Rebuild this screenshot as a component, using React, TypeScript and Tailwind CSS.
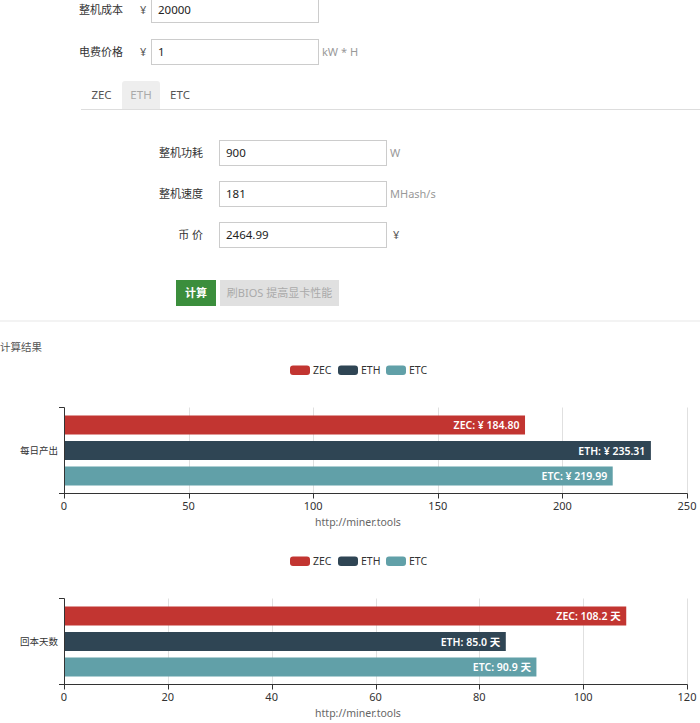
import React from "react";

const FONT = '"Noto Sans", "Noto Sans CJK SC", sans-serif';
const COLORS = { ZEC: "#c23531", ETH: "#2f4554", ETC: "#61a0a8" };

type Bar = { name: "ZEC" | "ETH" | "ETC"; value: number; label: string };

function Chart({ max, step, bars, category, height }: { max: number; step: number; bars: Bar[]; category: string; height: number }) {
  const x0 = 64;
  const x1 = 687;
  const top = 52.5;
  const bottom = 138.5;
  const sx = (v: number) => x0 + (v / max) * (x1 - x0);
  const ticks: number[] = [];
  for (let v = 0; v <= max; v += step) ticks.push(v);
  const barTops = [60.5, 86, 111.5];
  const legend: { name: "ZEC" | "ETH" | "ETC"; x: number }[] = [
    { name: "ZEC", x: 290 },
    { name: "ETH", x: 338 },
    { name: "ETC", x: 386 },
  ];
  return (
    <svg width={700} height={height} className="block" style={{ fontFamily: FONT }}>
      {legend.map((l) => (
        <g key={l.name}>
          <rect x={l.x} y={10.5} width={20} height={9.5} rx={3} fill={COLORS[l.name]} />
          <text x={l.x + 23} y={19} fontSize={10.5} fill="#333">{l.name}</text>
        </g>
      ))}
      {ticks.slice(1).map((v) => (
        <line key={v} x1={Math.round(sx(v)) + 0.5} x2={Math.round(sx(v)) + 0.5} y1={top} y2={bottom} stroke="#e0e0e0" strokeWidth={1} />
      ))}
      {bars.map((b, i) => (
        <g key={b.name}>
          <rect x={x0 + 0.5} y={barTops[i]} width={sx(b.value) - x0} height={19} fill={COLORS[b.name]} />
          <text x={sx(b.value) - 5} y={barTops[i] + 13.5} fontSize={10.5} fontWeight={600} fill="#fff" textAnchor="end">{b.label}</text>
        </g>
      ))}
      <line x1={x0 + 0.5} x2={x0 + 0.5} y1={top} y2={bottom} stroke="#333" />
      <line x1={x0 - 5} x2={x0 + 0.5} y1={top} y2={top} stroke="#333" />
      <line x1={x0 - 5} x2={x0 + 0.5} y1={bottom} y2={bottom} stroke="#333" />
      <line x1={x0} x2={x1 + 0.5} y1={bottom} y2={bottom} stroke="#333" />
      {ticks.map((v) => (
        <g key={v}>
          <line x1={Math.round(sx(v)) + 0.5} x2={Math.round(sx(v)) + 0.5} y1={bottom} y2={bottom + 5} stroke="#333" />
          <text x={sx(v)} y={bottom + 16} fontSize={11} fill="#333" textAnchor="middle">{v}</text>
        </g>
      ))}
      <text x={58} y={(top + bottom) / 2 + 3.5} fontSize={9.5} fill="#333" textAnchor="end">{category}</text>
      <text x={358} y={bottom + 32} fontSize={10.5} fill="#666" textAnchor="middle">http://miner.tools</text>
    </svg>
  );
}

function Input({ value }: { value: string }) {
  return (
    <div className="h-[26px] w-[168px] border border-[#ccc] bg-white px-[6px] flex items-center text-[11.5px] text-[#222]">
      {value}
    </div>
  );
}

export default function App() {
  return (
    <div className="w-[700px] h-[723px] overflow-hidden bg-white text-[#333]" style={{ fontFamily: FONT }}>
      <div className="mt-[-3px] flex items-center h-[26px] pl-[79px]">
        <span className="w-[61px] text-[11px] text-[#333]">整机成本</span>
        <span className="w-[11px] text-[11px] text-[#555]">¥</span>
        <Input value="20000" />
      </div>
      <div className="mt-[16px] flex items-center h-[26px] pl-[79px]">
        <span className="w-[61px] text-[11px] text-[#333]">电费价格</span>
        <span className="w-[11px] text-[11px] text-[#555]">¥</span>
        <Input value="1" />
        <span className="ml-[3px] text-[11px] text-[#999]">kW * H</span>
      </div>
      <div className="mt-[16px] ml-[81px] h-[29px] flex items-end border-b border-[#ddd] text-[11.5px]">
        <div className="w-[41px] h-[28px] flex items-center justify-center text-[#555]">ZEC</div>
        <div className="w-[38px] h-[28px] flex items-center justify-center bg-[#eee] rounded-t-[3px] text-[#aaa]">ETH</div>
        <div className="w-[40px] h-[28px] flex items-center justify-center text-[#555]">ETC</div>
      </div>
      <div className="mt-[30px] flex flex-col gap-[15px]">
        {[
          ["整机功耗", "900", "W"],
          ["整机速度", "181", "MHash/s"],
          ["币 价", "2464.99", "¥"],
        ].map(([l, v, u]) => (
          <div key={l} className="flex items-center h-[26px]">
            <span className="w-[203px] text-right text-[11px] text-[#333]">{l}</span>
            <span className="w-[16px]" />
            <Input value={v} />
            <span className={`${u === "¥" ? "ml-[6px] text-[#555]" : "ml-[3px] text-[#999]"} text-[11px]`}>{u}</span>
          </div>
        ))}
      </div>
      <div className="mt-[32px] ml-[176px] flex gap-[4px] h-[26px]">
        <div className="w-[40px] h-[26px] bg-[#3b8e3c] text-white text-[11px] font-bold flex items-center justify-center">计算</div>
        <div className="w-[119px] h-[26px] bg-[#e0e0e0] text-[#aaa] text-[11px] flex items-center justify-center">刷BIOS 提高显卡性能</div>
      </div>
      <div className="mt-[14px] h-[2px] bg-[#f3f3f3]" />
      <div className="mt-[17px] h-[16px] text-[10.5px] text-[#555] leading-[16px]">计算结果</div>
      <Chart
        height={191}
        max={250}
        step={50}
        category="每日产出"
        bars={[
          { name: "ZEC", value: 184.8, label: "ZEC: ¥ 184.80" },
          { name: "ETH", value: 235.31, label: "ETH: ¥ 235.31" },
          { name: "ETC", value: 219.99, label: "ETC: ¥ 219.99" },
        ]}
      />
      <Chart
        height={180}
        max={120}
        step={20}
        category="回本天数"
        bars={[
          { name: "ZEC", value: 108.2, label: "ZEC: 108.2 天" },
          { name: "ETH", value: 85.0, label: "ETH: 85.0 天" },
          { name: "ETC", value: 90.9, label: "ETC: 90.9 天" },
        ]}
      />
    </div>
  );
}
